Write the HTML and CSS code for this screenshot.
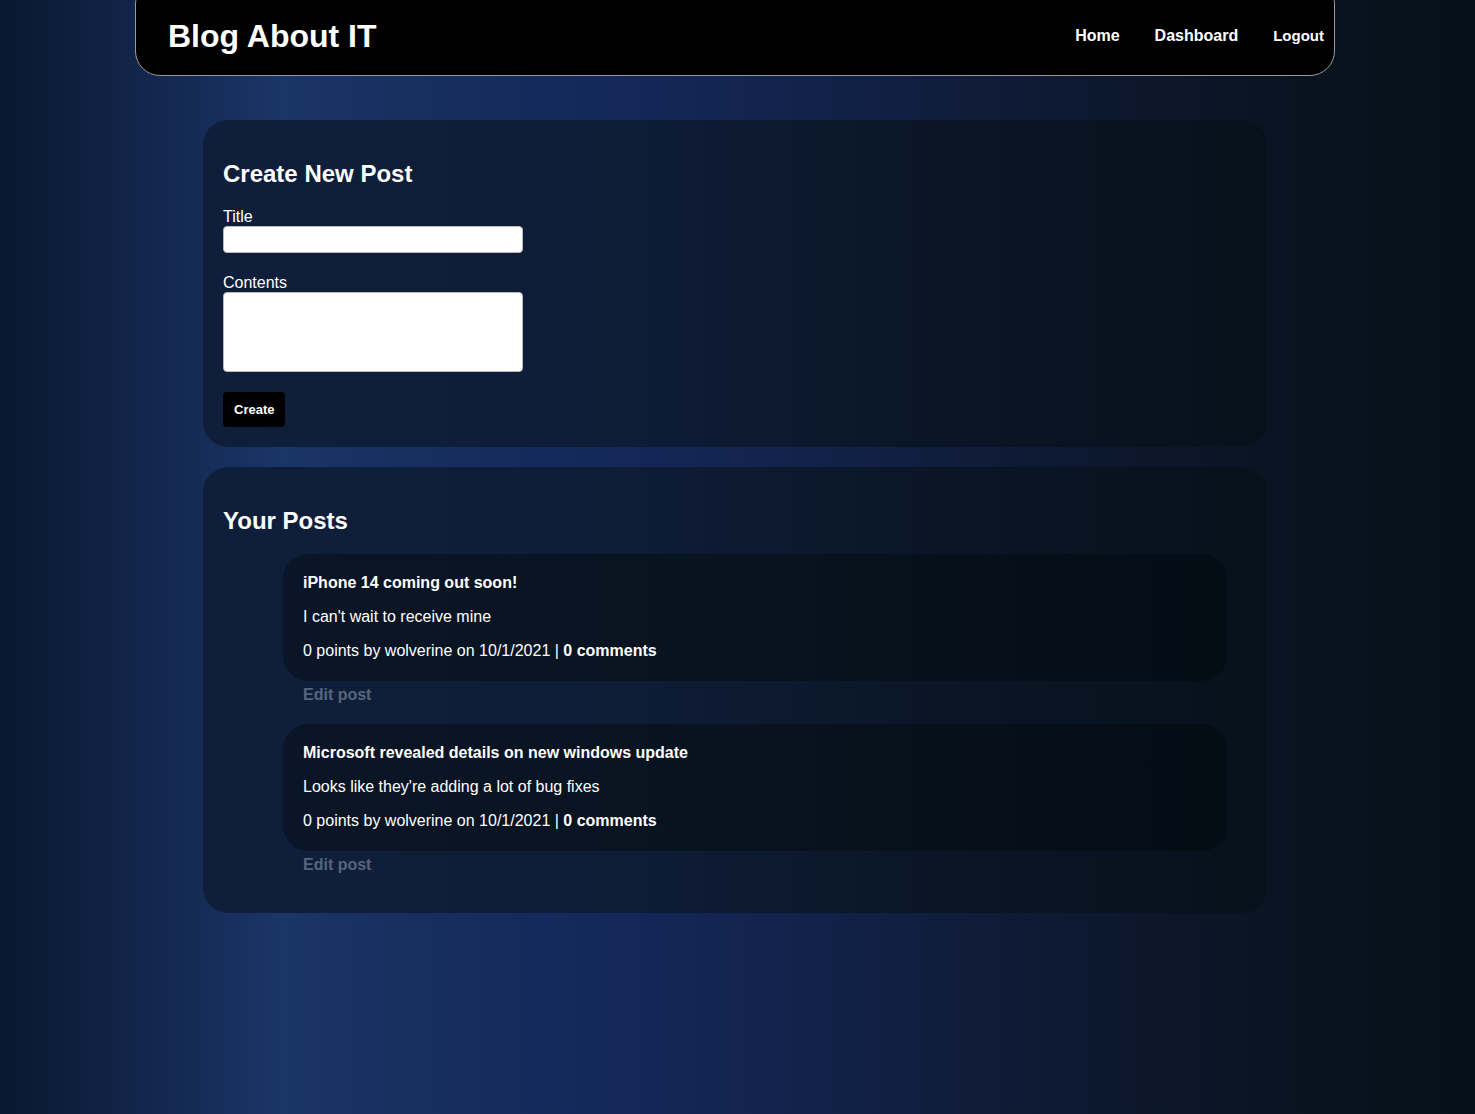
FILE: index.html
```html
<!DOCTYPE html>
<html lang="en">
<head>
<meta charset="utf-8">
<title>Blog About IT</title>
<link rel="stylesheet" href="styles.css">
</head>
<body>
<header class="site-header">
  <h1 class="brand">Blog About IT</h1>
  <nav class="nav">
    <a class="nav-link" href="#">Home</a>
    <a class="nav-link" href="#">Dashboard</a>
    <a class="nav-link" href="#">Logout</a>
  </nav>
</header>
<main class="main">
  <section class="card">
    <h2 class="card-title">Create New Post</h2>
    <form class="form">
      <div class="field">
        <label class="label" for="title">Title</label>
        <input class="input" id="title" type="text">
      </div>
      <div class="field">
        <label class="label" for="contents">Contents</label>
        <textarea class="textarea" id="contents"></textarea>
      </div>
      <button class="btn" type="button">Create</button>
    </form>
  </section>
  <section class="card">
    <h2 class="card-title">Your Posts</h2>
    <div class="posts">
      <article class="post">
        <div class="post-card">
          <p class="post-title">iPhone 14 coming out soon!</p>
          <p class="post-body">I can't wait to receive mine</p>
          <p class="post-meta">0 points by wolverine on 10/1/2021 | <strong>0 comments</strong></p>
        </div>
        <a class="edit-link" href="#">Edit post</a>
      </article>
      <article class="post">
        <div class="post-card">
          <p class="post-title">Microsoft revealed details on new windows update</p>
          <p class="post-body">Looks like they're adding a lot of bug fixes</p>
          <p class="post-meta">0 points by wolverine on 10/1/2021 | <strong>0 comments</strong></p>
        </div>
        <a class="edit-link" href="#">Edit post</a>
      </article>
    </div>
  </section>
</main>
</body>
</html>
```
FILE: styles.css
```css
* { box-sizing: border-box; }
html, body { margin: 0; padding: 0; }
body {
  min-height: 1114px;
  padding-right: 5px;
  font-family: "Liberation Sans", Arial, sans-serif;
  color: #fff;
  background: linear-gradient(to right,
    #091830 0%,
    #13264c 10%,
    #1a3567 19%,
    #172f5f 28%,
    #14285a 40%,
    #132450 50%,
    #111f42 60%,
    #0f1b36 68%,
    #0b1629 80%,
    #08131f 90%,
    #06101a 100%);
}
.site-header {
  width: 1200px;
  height: 97px;
  margin: -21px auto 0;
  padding: 21px 10px 0 32px;
  background: #000;
  border: 1px solid #9a9a9a;
  border-radius: 25px;
  display: flex;
  align-items: center;
  justify-content: space-between;
}
.brand {
  margin: 0;
  font-size: 32px;
  font-weight: 700;
  line-height: 1;
  position: relative;
  top: -2px;
}
.nav {
  display: flex;
  gap: 35px;
  align-items: center;
}
.nav-link {
  color: #fff;
  text-decoration: none;
  font-weight: 700;
  font-size: 16px;
  position: relative;
  top: -2px;
}
.nav-link:last-child { font-size: 15px; top: -3px; }
.main {
  width: 1064px;
  margin: 44px auto 0;
  display: flex;
  flex-direction: column;
  gap: 20px;
}
.card {
  padding: 20px;
  border-radius: 25px;
  background: linear-gradient(to right, #0f1f3b 0%, #0e1c36 40%, #0a1626 70%, #06111b 100%);
}
.card-title {
  margin: 20px 0;
  font-size: 24px;
  font-weight: 700;
  line-height: 27px;
}
.form { display: flex; flex-direction: column; align-items: flex-start; }
.field { display: flex; flex-direction: column; margin-bottom: 20px; }
.label { font-size: 16px; line-height: 19px; }
.input {
  width: 300px;
  height: 27px;
  border: 1px solid #b9b9b9;
  border-radius: 4px;
  background: #fff;
}
.textarea {
  width: 300px;
  height: 80px;
  border: 1px solid #b9b9b9;
  border-radius: 4px;
  background: #fff;
  resize: none;
  font-family: inherit;
}
.btn {
  height: 35px;
  padding: 0 11px;
  background: #000;
  color: #fff;
  border: none;
  border-radius: 4px;
  font-family: inherit;
  font-size: 13px;
  font-weight: 700;
}
.posts {
  margin: 1px 20px 19px 60px;
  display: flex;
  flex-direction: column;
  gap: 20px;
}
.post { display: flex; flex-direction: column; }
.post-card {
  padding: 4px 20px 5px;
  border-radius: 25px;
  background: linear-gradient(to right, #0a1627 0%, #08131f 50%, #040c14 100%);
}
.post-card p {
  margin: 16px 0;
  font-size: 16px;
  line-height: 18px;
}
.post-title { font-weight: 700; }
.edit-link {
  margin-top: 5px;
  padding-left: 20px;
  font-size: 16px;
  line-height: 18px;
  font-weight: 700;
  color: #56657c;
  text-decoration: none;
}
```
